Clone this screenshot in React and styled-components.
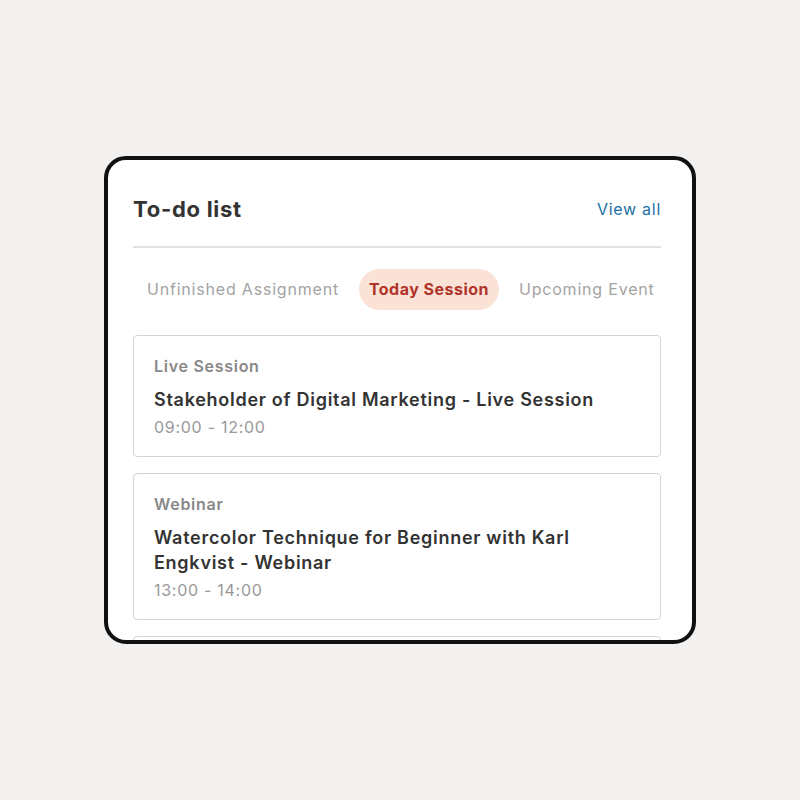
import React, { useState } from 'react'
import styled, { createGlobalStyle } from 'styled-components'

const GlobalStyle = createGlobalStyle`
    body {
        margin: 0;
        background: #f2f1ef;
        font-family: Inter, "Noto Sans", sans-serif;
    }
`;

const tabs = ['Unfinished Assignment', 'Today Session', 'Upcoming Event']

const sessions = [
    { type: 'Live Session', title: 'Stakeholder of Digital Marketing - Live Session', time: '09:00 - 12:00' },
    { type: 'Webinar', title: 'Watercolor Technique for Beginner with Karl Engkvist - Webinar', time: '13:00 - 14:00' },
    { type: 'Workshop', title: 'Building a Personal Brand - Workshop', time: '15:00 - 16:00' },
]

function App() {
    const [active, setActive] = useState('Today Session')

    return (
        <Page>
            <GlobalStyle />
            <Panel>
                <Header>
                    <Title>To-do list</Title>
                    <ViewAll href="#">View all</ViewAll>
                </Header>
                <Tabs>
                    {tabs.map(t => (
                        <Tab key={t} $active={t === active} onClick={() => setActive(t)}>{t}</Tab>
                    ))}
                </Tabs>
                <List>
                    {sessions.map(s => (
                        <Item key={s.title}>
                            <Type>{s.type}</Type>
                            <ItemTitle>{s.title}</ItemTitle>
                            <Time>{s.time}</Time>
                        </Item>
                    ))}
                </List>
            </Panel>
        </Page>
    )
}

const Page = styled.div`
    width: 800px;
    height: 800px;
    display: flex;
    justify-content: center;
    padding-top: 156px;
    box-sizing: border-box;
`;

const Panel = styled.div`
    width: 592px;
    height: 488px;
    box-sizing: border-box;
    border: 4px solid #111;
    border-radius: 22px;
    background: #fff;
    padding: 0 31px 0 25px;
    overflow: hidden;
    letter-spacing: 0.045em;
`;

const Header = styled.div`
    display: flex;
    justify-content: space-between;
    align-items: center;
    padding: 37px 0 25px;
    border-bottom: 2px solid #e2e2e2;
`;

const Title = styled.h2`
    margin: 0;
    font-size: 22px;
    line-height: 24px;
    font-weight: 700;
    color: #333;
`;

const ViewAll = styled.a`
    font-size: 16px;
    line-height: 24px;
    color: #1b6fa6;
    text-decoration: none;
`;

const Tabs = styled.div`
    display: flex;
    align-items: center;
    gap: 10px;
    padding: 21px 0 0 4px;
`;

const Tab = styled.div`
    flex-shrink: 0;
    white-space: nowrap;
    height: 41px;
    line-height: 41px;
    padding: 0 10px;
    border-radius: 21px;
    font-size: 16px;
    font-weight: ${p => p.$active ? 700 : 400};
    letter-spacing: ${p => p.$active ? '0.03em' : '0.05em'};
    color: ${p => p.$active ? '#b0342a' : '#a3a3a3'};
    background: ${p => p.$active ? '#fae3d6' : 'transparent'};
    cursor: pointer;
`;

const List = styled.div`
    display: flex;
    flex-direction: column;
    gap: 16px;
    margin-top: 25px;
`;

const Item = styled.div`
    border: 1px solid #d4d4d4;
    border-radius: 4px;
    padding: 19px 20px 18px;
    display: flex;
    flex-direction: column;
`;

const Type = styled.div`
    font-size: 16px;
    font-weight: 600;
    color: #888;
    line-height: 22px;
    margin-bottom: 10px;
`;

const ItemTitle = styled.div`
    font-size: 18px;
    font-weight: 600;
    color: #333;
    line-height: 25px;
`;

const Time = styled.div`
    font-size: 16px;
    color: #999;
    line-height: 22px;
    margin-top: 4px;
`;

export default App
